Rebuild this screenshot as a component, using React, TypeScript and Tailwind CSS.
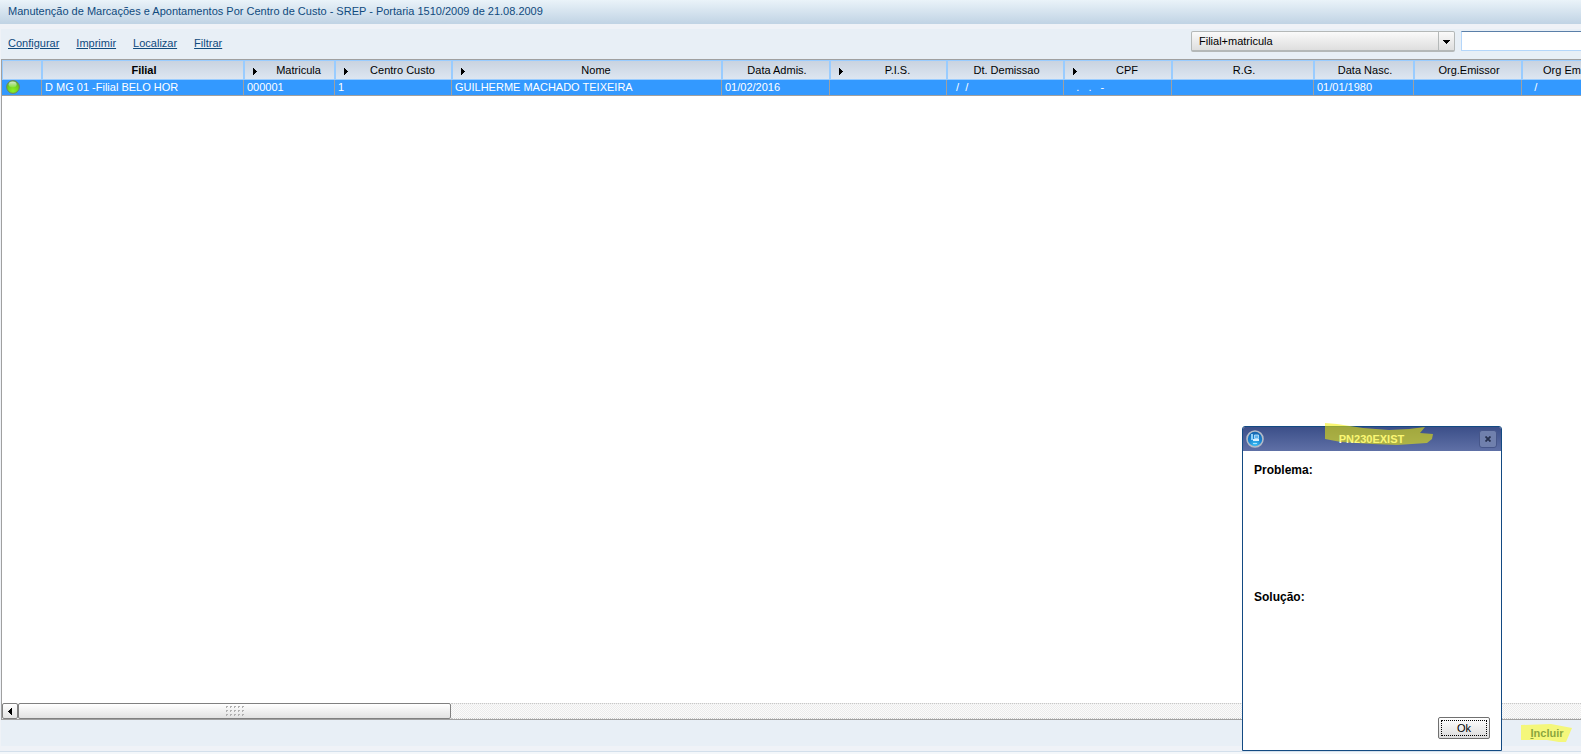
import { ReactNode } from 'react';

type Column = {
  label: string;
  value: string;
  width: string;
  sortable?: boolean;
  bold?: boolean;
  clipped?: boolean;
};

const columns: Column[] = [
  { label: 'Filial', value: 'D MG 01 -Filial BELO HOR', width: 'w-[202px]', bold: true },
  { label: 'Matricula', value: '000001', width: 'w-[91px]', sortable: true },
  { label: 'Centro Custo', value: '1', width: 'w-[117px]', sortable: true },
  { label: 'Nome', value: 'GUILHERME MACHADO TEIXEIRA', width: 'w-[270px]', sortable: true },
  { label: 'Data Admis.', value: '01/02/2016', width: 'w-[108px]' },
  { label: 'P.I.S.', value: '', width: 'w-[117px]', sortable: true },
  { label: 'Dt. Demissao', value: '  /  /', width: 'w-[117px]' },
  { label: 'CPF', value: '   .   .   -', width: 'w-[108px]', sortable: true },
  { label: 'R.G.', value: '', width: 'w-[142px]' },
  { label: 'Data Nasc.', value: '01/01/1980', width: 'w-[100px]' },
  { label: 'Org.Emissor', value: '', width: 'w-[108px]' },
  { label: 'Org Em', value: '   /', width: 'w-[108px]', clipped: true },
];

const actions = ['Configurar', 'Imprimir', 'Localizar', 'Filtrar'];

function SortArrow() {
  return (
    <svg width="4" height="7" viewBox="0 0 4 7" className="mt-[3px] shrink-0" shapeRendering="crispEdges">
      <path d="M0 0h1v1h1v1h1v1h1v1h-1v1h-1v1h-1v1h-1z" fill="#000" />
    </svg>
  );
}

function HeaderCell({ column }: { column: Column }) {
  return (
    <th
      scope="col"
      className={`${column.width} h-5 border-y border-l-2 border-[#99ccff] bg-linear-to-b from-[#c9d3e0] to-[#dde6f1] p-0 ${column.bold ? 'font-bold' : 'font-normal'}`}
    >
      <div className={`flex items-center ${column.sortable ? 'pl-2' : ''}`}>
        {column.sortable && <SortArrow />}
        <span className={column.clipped ? 'flex-1 pl-5 text-left' : column.sortable ? 'flex-1 pl-1.5' : 'flex-1 pl-0.5'}>
          {column.label}
        </span>
      </div>
    </th>
  );
}

function StatusBall() {
  return (
    <svg width="14" height="14" viewBox="0 0 14 14" className="ml-1 block" role="img" aria-label="Ativo">
      <defs>
        <radialGradient id="ball" cx="0.5" cy="0.8" r="0.75">
          <stop offset="0" stopColor="#8df02a" />
          <stop offset="0.6" stopColor="#6fd31c" />
          <stop offset="1" stopColor="#5aa832" />
        </radialGradient>
        <linearGradient id="shine" x1="0" y1="0" x2="0" y2="1">
          <stop offset="0" stopColor="#fff" stopOpacity="0.75" />
          <stop offset="1" stopColor="#fff" stopOpacity="0.1" />
        </linearGradient>
      </defs>
      <circle cx="7" cy="7" r="6.4" fill="url(#ball)" stroke="#6d8467" />
      <ellipse cx="6.6" cy="4.6" rx="4" ry="3" fill="url(#shine)" />
    </svg>
  );
}

function Grid() {
  return (
    <table className="w-[1627px] table-fixed border-separate border-spacing-0 text-black">
      <thead>
        <tr>
          <th className="h-5 w-[39px] border-y border-l border-[#99ccff] bg-linear-to-b from-[#c9d3e0] to-[#dde6f1] p-0" />
          {columns.map((column) => (
            <HeaderCell key={column.label} column={column} />
          ))}
        </tr>
      </thead>
      <tbody>
        <tr className="bg-[#3399ff] text-white">
          <td className="h-4 border-b border-[#a0a0a0] p-0 align-top">
            <StatusBall />
          </td>
          {columns.map((column) => (
            <td
              key={column.label}
              className="h-4 border-b border-l border-[#a0a0a0] p-0 pl-[3px] align-top whitespace-pre"
            >
              {column.value}
            </td>
          ))}
        </tr>
      </tbody>
    </table>
  );
}

function ScrollBar() {
  return (
    <div className="flex h-4 bg-[#f4f4f4] bg-[repeating-conic-gradient(#ececec_0_25%,#fbfbfb_0_50%)] bg-size-[2px_2px]">
      <button
        aria-label="Rolar para a esquerda"
        className="flex w-4 shrink-0 items-center justify-center rounded-[2px] border border-[#808080] bg-linear-to-b from-white to-[#e4e4e4] pr-px"
      >
        <svg width="4" height="7" viewBox="0 0 4 7" shapeRendering="crispEdges">
          <path d="M4 0h-1v1h-1v1h-1v1h-1v1h1v1h1v1h1v1h1z" fill="#000" />
        </svg>
      </button>
      <div className="flex w-[433px] shrink-0 items-center justify-center rounded-[2px] border border-[#808080] bg-linear-to-b from-white to-[#e2e2e2]">
        <svg width="18" height="10" viewBox="0 0 18 10" shapeRendering="crispEdges">
          {[0, 4, 8].map((y) =>
            [0, 4, 8, 12, 16].map((x) => (
              <path key={`${x}-${y}`} d={`M${x} ${y}h2v1h-1v1h-1z`} fill="#b0b0b0" />
            ))
          )}
        </svg>
      </div>
      <div className="flex-1 border-y border-dotted border-[#c8c8c8]" />
    </div>
  );
}

function Logo() {
  return (
    <svg width="18" height="18" viewBox="0 0 18 18" className="shrink-0">
      <defs>
        <radialGradient id="globe" cx="0.5" cy="0.85" r="0.85">
          <stop offset="0" stopColor="#3cc0f6" />
          <stop offset="0.5" stopColor="#1a84d0" />
          <stop offset="1" stopColor="#1560a8" />
        </radialGradient>
      </defs>
      <circle cx="9" cy="9" r="8" fill="url(#globe)" stroke="#b4bcc8" strokeWidth="1.6" />
      <path d="M5 4h2v6H5z" fill="#8fd0f8" />
      <path d="M7 9h6v2H7z" fill="#d8f0ff" />
      <path d="M8.5 5h4v3.500h-4z" fill="#5fb4ec" stroke="#c4e6fc" strokeWidth="0.8" />
      <path d="M7 13.500h4" stroke="#a8e4fc" />
    </svg>
  );
}

function MessageLabel({ children }: { children: ReactNode }) {
  return <h2 className="h-[127px] text-[12px] leading-4 font-bold">{children}</h2>;
}

function Dialog() {
  return (
    <div
      role="dialog"
      aria-label="PN230EXIST"
      className="absolute right-[79px] bottom-[3px] flex h-[325px] w-[260px] flex-col rounded-t-[3px] border border-[#134a82] bg-white text-black"
    >
      <div className="flex h-6 shrink-0 items-center justify-between rounded-t-[2px] bg-linear-to-b from-[#3c4f89] to-[#5f70a6] pr-1 pb-px pl-[3px]">
        <Logo />
        <span className="text-[11px] font-bold text-white">PN230EXIST</span>
        <button
          aria-label="Fechar"
          className="flex h-[18px] w-[18px] items-center justify-center rounded-[3px] border border-[#46568a] bg-[#7080ad]"
        >
          <svg width="6" height="6" viewBox="0 0 6 6">
            <path d="M0.5 0.5l5 5M5.5 0.5l-5 5" stroke="#26304f" strokeWidth="1.8" />
          </svg>
        </button>
      </div>
      <div className="flex-1 px-[11px] pt-[11px]">
        <MessageLabel>Problema:</MessageLabel>
        <MessageLabel>Solução:</MessageLabel>
      </div>
      <div className="absolute right-[11px] bottom-[11px]">
        <button className="block h-[22px] w-[52px] rounded-[2px] border border-[#707070] bg-linear-to-b from-white to-[#dcdcdc] p-0.5">
          <span className="flex h-full items-center justify-center border border-dotted border-black">Ok</span>
        </button>
      </div>
      {/* marker stroke over the title */}
      <svg width="110" height="24" viewBox="0 0 110 24" className="pointer-events-none absolute top-[-5px] left-[82px]">
        <path
          d="M0 1L12 2L38 6L64 8L84 7L100 5L95 11L108 12L107 17L102 21L72 23L48 22L16 20L0 17Z"
          fill="#f5f000"
          fillOpacity="0.55"
        />
      </svg>
    </div>
  );
}

export default function App() {
  return (
    <div className="relative flex h-screen flex-col overflow-hidden bg-[#eff2f7] font-['Liberation_Sans',Arial,sans-serif] text-[11px] leading-[14px]">
      <h1 className="h-6 shrink-0 bg-linear-to-b from-[#eaf3f9] to-[#c0d3e4] pt-1 pl-2 text-[#0f4a7d]">
        Manutenção de Marcações e Apontamentos Por Centro de Custo - SREP - Portaria 1510/2009 de 21.08.2009
      </h1>

      <main className="mt-[5px] ml-px flex min-h-0 flex-1 flex-col bg-[#e8eff6]">
        <div className="flex h-[30px] shrink-0 items-start pt-0.5 pl-[7px]">
          <nav className="flex gap-[17px] pt-[5px] text-[#0f4a7d]">
            {actions.map((action) => (
              <a key={action} href="#" className="underline">
                {action}
              </a>
            ))}
          </nav>
          <div className="-mr-px ml-auto flex shrink-0 gap-1.5">
            <div className="relative">
              <select
                aria-label="Ordem"
                className="block h-[21px] w-[264px] appearance-none rounded-[2px] border border-b-2 border-[#b4b8b8] bg-linear-to-b from-[#fafafa] to-[#dedede] pl-[7px] text-black"
              >
                <option>Filial+matricula</option>
              </select>
              <span className="pointer-events-none absolute inset-y-px right-px flex w-4 items-center justify-center border-l border-[#b4b8b8]">
                <svg width="7" height="4" viewBox="0 0 7 4" shapeRendering="crispEdges">
                  <path d="M0 0h7v1h-1v1h-1v1h-1v1h-1v-1h-1v-1h-1v-1h-1z" fill="#000" />
                </svg>
              </span>
            </div>
            <input
              aria-label="Pesquisar"
              className="h-5 w-[121px] border border-r-0 border-t-[#5a7fa8] border-b-[#b4d6fa] border-l-[#b4d6fa] bg-white px-1"
            />
          </div>
        </div>

        <section className="flex min-h-0 flex-1 flex-col overflow-hidden border border-r-0 border-[#a0a0a0] bg-white">
          <div className="min-h-0 flex-1 overflow-hidden">
            <Grid />
          </div>
          <ScrollBar />
        </section>

        <footer className="flex h-[26px] shrink-0 items-center justify-end pr-2">
          <button className="relative flex h-[18px] w-[52px] items-center justify-center font-bold text-[#0f4a7d]">
            <span>
              <span className="underline">I</span>ncluir
            </span>
            <svg width="52" height="19" viewBox="0 0 52 19" className="absolute top-0 left-0">
              <path d="M0 1L30 0L51 4L45 18L38 18L26 16L0 16Z" fill="#ffff00" fillOpacity="0.5" />
            </svg>
          </button>
        </footer>
      </main>

      <div className="mt-[5px] h-[3px] shrink-0 border-t border-[#d3dfeb] bg-[#f4f7fa]" />

      <Dialog />
    </div>
  );
}
